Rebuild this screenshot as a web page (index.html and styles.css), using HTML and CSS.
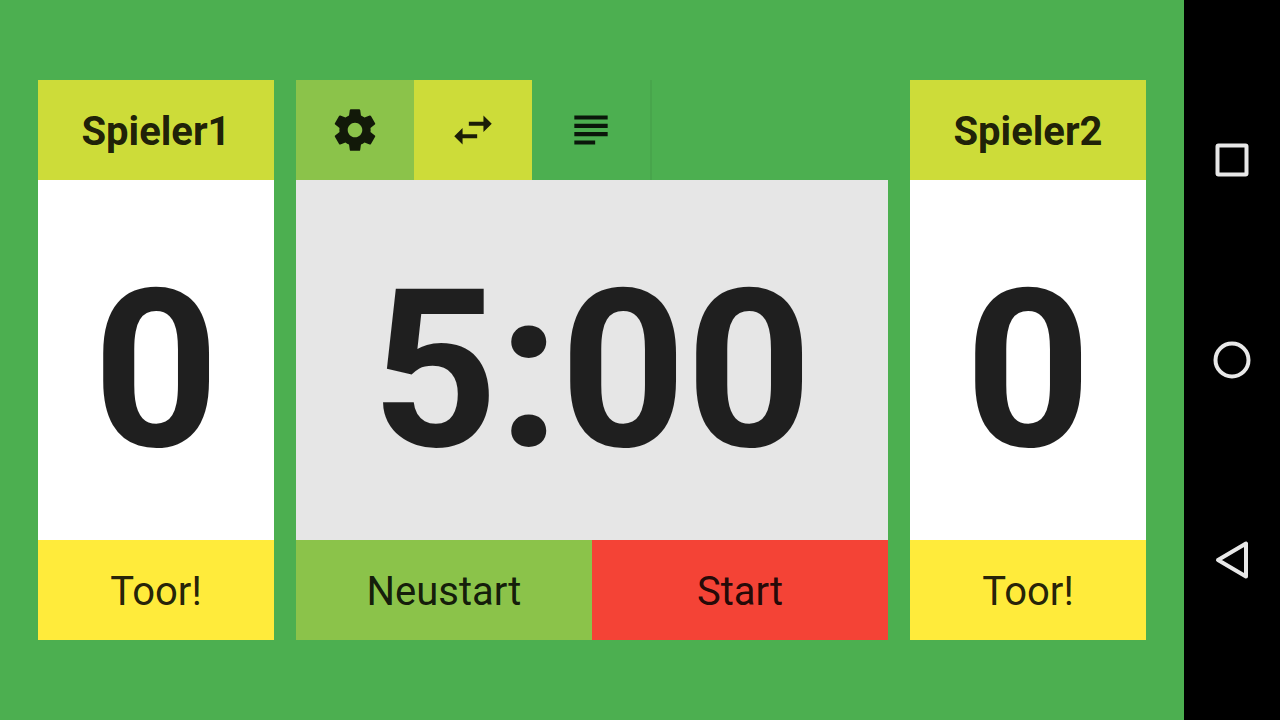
FILE: index.html
```
<!DOCTYPE html>
<html lang="de">
<head>
  <meta charset="UTF-8" />
  <meta name="viewport" content="width=device-width, initial-scale=1.0"/>
  <title>Spielstand</title>
  <link rel="stylesheet" href="styles.css">
</head>
<body>
  <main class="board">
    <!-- Player 1 -->
    <section class="panel">
      <button type="button" class="player-name">Spieler1</button>
      <div class="score">0</div>
      <button type="button" class="goal-btn">Toor!</button>
    </section>

    <!-- Clock -->
    <section class="panel">
      <div class="toolbar">
        <button type="button" class="tool settings" aria-label="Einstellungen">
          <svg class="icon" viewBox="0 0 24 24"><path d="M19.43 12.98c.04-.32.07-.64.07-.98s-.03-.66-.07-.98l2.11-1.65c.19-.15.24-.42.12-.64l-2-3.46c-.12-.22-.39-.3-.61-.22l-2.49 1c-.52-.4-1.08-.73-1.69-.98l-.38-2.65C14.46 2.18 14.25 2 14 2h-4c-.25 0-.46.18-.49.42l-.38 2.65c-.61.25-1.17.59-1.69.98l-2.49-1c-.23-.09-.49 0-.61.22l-2 3.46c-.13.22-.07.49.12.64l2.11 1.65c-.04.32-.07.65-.07.98s.03.66.07.98l-2.11 1.65c-.19.15-.24.42-.12.64l2 3.46c.12.22.39.3.61.22l2.49-1c.52.4 1.08.73 1.69.98l.38 2.65c.03.24.24.42.49.42h4c.25 0 .46-.18.49-.42l.38-2.65c.61-.25 1.17-.59 1.69-.98l2.49 1c.23.09.49 0 .61-.22l2-3.46c.12-.22.07-.49-.12-.64l-2.11-1.65zM12 15.5c-1.93 0-3.5-1.57-3.5-3.5s1.57-3.5 3.5-3.5 3.5 1.57 3.5 3.5-1.57 3.5-3.5 3.5z"/></svg>
        </button>
        <button type="button" class="tool swap" aria-label="Seiten tauschen">
          <svg class="icon" viewBox="0 0 24 24"><path d="M6.99 11L3 15l3.99 4v-3H14v-2H6.99v-3zM21 9l-3.99-4v3H10v2h7.01v3L21 9z"/></svg>
        </button>
        <button type="button" class="tool list" aria-label="Verlauf">
          <svg class="icon" viewBox="0 0 24 24"><path d="M14 17H4v2h10v-2zm6-8H4v2h16V9zM4 15h16v-2H4v2zM4 5v2h16V5H4z"/></svg>
        </button>
      </div>
      <div class="score clock">5:00</div>
      <div class="controls">
        <button type="button" class="restart-btn">Neustart</button>
        <button type="button" class="start-btn">Start</button>
      </div>
    </section>

    <!-- Player 2 -->
    <section class="panel">
      <button type="button" class="player-name">Spieler2</button>
      <div class="score">0</div>
      <button type="button" class="goal-btn">Toor!</button>
    </section>
  </main>

  <nav class="navbar">
    <button type="button" class="nav-btn" aria-label="Übersicht">
      <svg class="nav-icon" viewBox="0 0 48 48"><rect x="9.500" y="9.500" width="29" height="29" rx="1"/></svg>
    </button>
    <button type="button" class="nav-btn" aria-label="Startseite">
      <svg class="nav-icon" viewBox="0 0 48 48"><circle cx="24" cy="24" r="16.500"/></svg>
    </button>
    <button type="button" class="nav-btn" aria-label="Zurück">
      <svg class="nav-icon" viewBox="0 0 48 48"><path d="M38 7.500V40.500L10 24z"/></svg>
    </button>
  </nav>
</body>
</html>
```

FILE: styles.css
```
* {
  box-sizing: border-box;
  margin: 0;
  padding: 0;
}
body {
  display: flex;
  min-height: 100vh;
  background: #4caf50;
  color: #1f1f1f;
  font-family: Roboto, sans-serif;
}
button {
  border: none;
  background: transparent;
  color: rgba(0, 0, 0, 0.87);
  font-family: inherit;
  font-size: 40px;
  cursor: pointer;
}
.board {
  flex: 1;
  display: grid;
  grid-template-columns: 236px 1fr 236px;
  gap: 22px;
  padding: 80px 38px;
}
.panel {
  display: grid;
  grid-template-rows: 100px 1fr 100px;
}
.player-name,
.goal-btn,
.restart-btn,
.start-btn {
  padding-top: 3px;
}
.player-name {
  background: #cddc39;
  font-weight: bold;
}
.score {
  display: flex;
  justify-content: center;
  align-items: center;
  padding-top: 22px;
  background: white;
  font-size: 220px;
  font-weight: bold;
  line-height: 1;
}
.clock {
  background: #e6e6e6;
}
.goal-btn {
  background: #ffeb3b;
}

/* Toolbar above the clock */
.toolbar {
  display: flex;
}
.tool {
  display: flex;
  justify-content: center;
  align-items: center;
  width: 118px;
}
.settings {
  background: #8bc34a;
}
.swap {
  background: #cddc39;
}
.list {
  box-shadow: 2px 0 #48a54c;
}
.icon {
  width: 50px;
  height: 50px;
  fill: currentColor;
}
.controls {
  display: grid;
  grid-template-columns: 1fr 1fr;
}
.restart-btn {
  background: #8bc34a;
}
.start-btn {
  background: #f44336;
}

/* System navigation */
.navbar {
  display: flex;
  flex-direction: column;
  width: 96px;
  padding: 60px 0;
  background: black;
}
.nav-btn {
  flex: 1;
  display: flex;
  justify-content: center;
  align-items: center;
}
.nav-icon {
  width: 48px;
  height: 48px;
  fill: none;
  stroke: #e8e8e8;
  stroke-width: 4;
  stroke-linejoin: round;
}
```
